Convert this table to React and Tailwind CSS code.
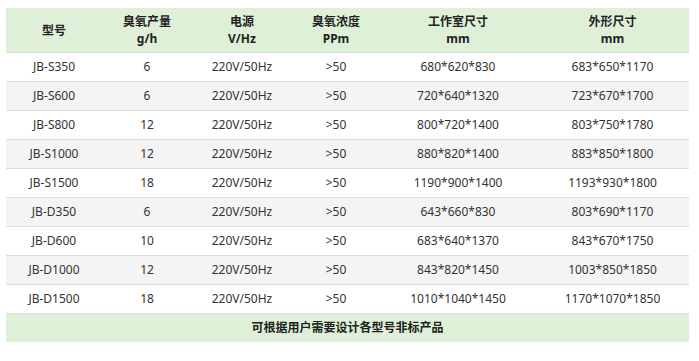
const ROWS = [
  ['JB-S350', '6', '220V/50Hz', '>50', '680*620*830', '683*650*1170'],
  ['JB-S600', '6', '220V/50Hz', '>50', '720*640*1320', '723*670*1700'],
  ['JB-S800', '12', '220V/50Hz', '>50', '800*720*1400', '803*750*1780'],
  ['JB-S1000', '12', '220V/50Hz', '>50', '880*820*1400', '883*850*1800'],
  ['JB-S1500', '18', '220V/50Hz', '>50', '1190*900*1400', '1193*930*1800'],
  ['JB-D350', '6', '220V/50Hz', '>50', '643*660*830', '803*690*1170'],
  ['JB-D600', '10', '220V/50Hz', '>50', '683*640*1370', '843*670*1750'],
  ['JB-D1000', '12', '220V/50Hz', '>50', '843*820*1450', '1003*850*1850'],
  ['JB-D1500', '18', '220V/50Hz', '>50', '1010*1040*1450', '1170*1070*1850'],
]

const HEAD = [
  ['型号'],
  ['臭氧产量', 'g/h'],
  ['电源', 'V/Hz'],
  ['臭氧浓度', 'PPm'],
  ['工作室尺寸', 'mm'],
  ['外形尺寸', 'mm'],
]

const COLS = 'grid grid-cols-[96px_90px_100px_88px_156px_153px]'

export default function App() {
  return (
    <div className="w-[699px] h-[361px] bg-white pt-2 pl-[6px] font-['Noto_Sans','Noto_Sans_CJK_SC',sans-serif] text-[12px] text-[#333]">
      <div className="w-[683px]">
        <div className={`${COLS} h-[44px] bg-[#dff0d8] items-center font-bold text-[#222] leading-[17px]`}>
          {HEAD.map((h, i) => (
            <div key={i} className="flex flex-col items-center">
              {h.map(t => <span key={t}>{t}</span>)}
            </div>
          ))}
        </div>
        {ROWS.map((r, i) => (
          <div
            key={r[0]}
            className={`${COLS} h-[29px] border-t border-[#dddddd] items-center ${i % 2 ? 'bg-[#f4f4f4]' : 'bg-white'}`}
          >
            {r.map((c, j) => (
              <div key={j} className="text-center">{c}</div>
            ))}
          </div>
        ))}
        <div className="h-[29px] border-t border-[#dddddd] bg-[#dff0d8] flex items-center justify-center font-bold text-[#222]">
          可根据用户需要设计各型号非标产品
        </div>
      </div>
    </div>
  )
}
